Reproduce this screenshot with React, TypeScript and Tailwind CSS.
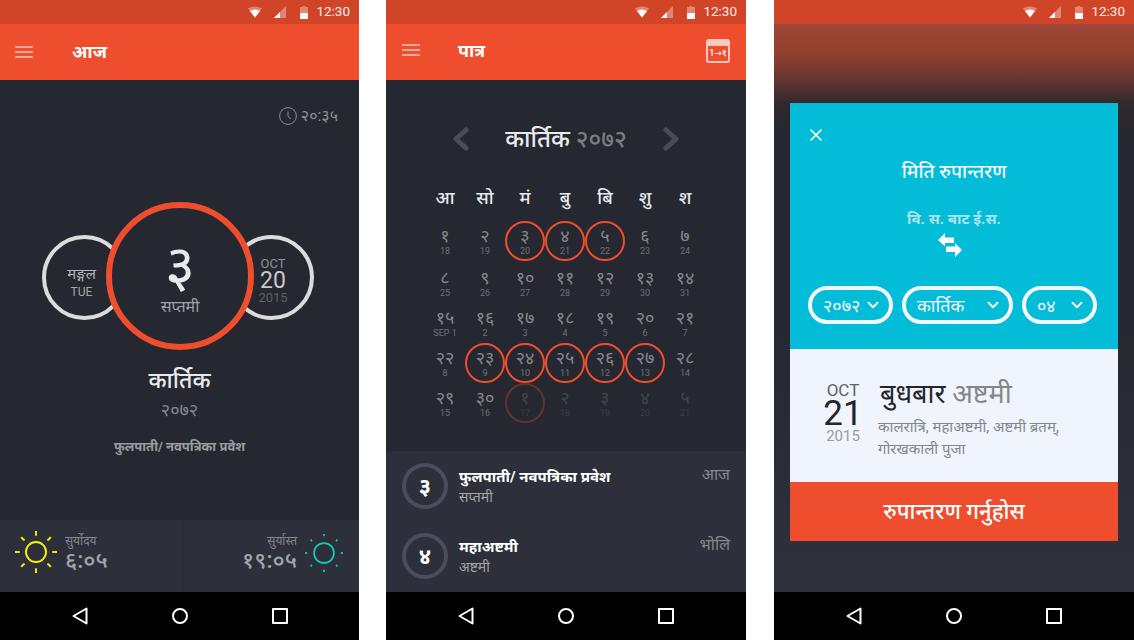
import React from 'react';
import { X, ChevronDown } from 'lucide-react';

const font = 'font-["Roboto","Noto_Sans","Noto_Sans_Devanagari","Lohit_Devanagari","DejaVu_Sans",sans-serif]';

const StatusBar = () => (
  <div className="h-6 shrink-0 flex items-center justify-end pr-[9px] bg-[#d04527]">
    <svg width="14" height="12" viewBox="0 0 14 12">
      <path d="M0 2.5 Q7 -1.5 14 2.5 L7 11.5 Z" fill="#fff" fillOpacity="0.35" />
      <path d="M2 5 Q7 2 12 5 L7 11.5 Z" fill="#fff" />
    </svg>
    <svg width="12" height="12" viewBox="0 0 12 12" className="ml-[12px]">
      <path d="M0 12 L12 0 V12 Z" fill="#fff" fillOpacity="0.35" />
      <path d="M0 12 L6 6 V12 Z" fill="#fff" />
    </svg>
    <svg width="8" height="13" viewBox="0 0 8 13" className="ml-[14px]">
      <path d="M2.5 0 H5.5 V1 H8 V13 H0 V1 H2.5 Z" fill="#fff" fillOpacity="0.35" />
      <path d="M0 7 H8 V13 H0 Z" fill="#fff" />
    </svg>
    <span className="ml-[8px] text-[13.5px] text-white/90 leading-none font-['Roboto']">12:30</span>
  </div>
);

const NavBar = () => (
  <div className="h-12 shrink-0 bg-black flex items-center justify-center gap-[84px]">
    <svg width="16" height="18" viewBox="0 0 16 18" fill="none" stroke="#fff" strokeWidth="2" strokeLinejoin="round">
      <path d="M14.5 1.5 V16.5 L1.5 9 Z" />
    </svg>
    <svg width="16" height="16" viewBox="0 0 16 16" fill="none" stroke="#fff" strokeWidth="2">
      <circle cx="8" cy="8" r="7" />
    </svg>
    <div className="w-[16px] h-[16px] border-2 border-white rounded-[1px]" />
  </div>
);

const Menu = () => (
  <div className="w-[18px] flex flex-col gap-[3px]">
    <div className="h-[2px] bg-white/50" />
    <div className="h-[2px] bg-white/50" />
    <div className="h-[2px] bg-white/50" />
  </div>
);

const Sun = ({ color, size, dash, r }: { color: string; size: number; dash: number; r: number }) => {
  const angles = [0, 45, 90, 135, 180, 225, 270, 315];
  return (
    <svg width={size} height={size} viewBox="0 0 44 44" fill="none" stroke={color} strokeWidth="2">
      <circle cx="22" cy="22" r={r} />
      {angles.map((a) => (
        <line key={a} x1="22" y1="0" x2="22" y2={dash} transform={`rotate(${a} 22 22)`} />
      ))}
    </svg>
  );
};

const TodayScreen = () => (
  <div className="w-[359px] h-[640px] flex flex-col bg-[#252830]">
    <StatusBar />
    <div className="h-14 shrink-0 bg-[#ee4e2d] flex items-center pl-[15px]">
      <Menu />
      <span className="ml-[39px] text-[18px] font-bold text-white -mt-[2px]">आज</span>
    </div>
    <div className="flex-1 flex flex-col items-center">
      <div className="self-end mr-[21px] mt-[26px] flex items-center gap-[4px] text-[#8d8f94] text-[16px] leading-[20px]">
        <svg width="18" height="18" viewBox="0 0 18 18" fill="none" stroke="#8d8f94" strokeWidth="1">
          <circle cx="9" cy="9" r="8.4" />
          <path d="M9 4.5 V9.5 L12 12" />
        </svg>
        <span>२०:३५</span>
      </div>
      <div className="mt-[76px] mr-[3px] flex items-center">
        <div className="w-[85px] h-[85px] rounded-full border-4 border-[#dcdcdc] flex flex-col items-center pt-[26px] pr-[6px] mt-[2px]">
          <span className="text-[15px] leading-[18px] text-[#b4b6b9] whitespace-nowrap">मङ्गल</span>
          <span className="text-[12px] leading-[16px] mt-[1px] text-[#a6a8ab]">TUE</span>
        </div>
        <div className="relative z-10 -ml-[21px] -mr-[25px] w-[148px] h-[148px] rounded-full border-[6px] border-[#ee4e2d] bg-[#252830] flex flex-col items-center pt-[28px]">
          <span className="text-[58px] leading-[60px] text-[#e8eaee]">३</span>
          <span className="text-[16px] leading-[20px] text-[#a0a2a6] mt-[1px]">सप्तमी</span>
        </div>
        <div className="w-[85px] h-[85px] rounded-full border-4 border-[#dcdcdc] flex flex-col items-center pt-[18px] pl-[3px] mt-[2px]">
          <span className="text-[13px] leading-[14px] text-[#8f9194]">OCT</span>
          <span className="text-[23px] leading-[20px] text-[#c8c9cb]">20</span>
          <span className="text-[13px] leading-[14px] text-[#5f6166]">2015</span>
        </div>
      </div>
      <span className="mt-[15px] text-[23px] leading-[32px] font-medium text-[#e8eaee]">कार्तिक</span>
      <span className="mt-[2px] text-[18px] leading-[22px] text-[#85878b]">२०७२</span>
      <span className="mt-[16px] text-[13px] leading-[20px] font-bold text-[#9a9c9f]">फुलपाती/ नवपत्रिका प्रवेश</span>
    </div>
    <div className="h-[72px] shrink-0 bg-[#2d303b] flex">
      <div className="flex-1 flex items-center pl-[15px] pr-2 border-r border-[#2a2d37]">
        <div className="-mt-[8px]">
          <Sun color="#f6f000" size={42} dash={5} r={10.5} />
        </div>
        <div className="ml-[8px] flex flex-col -mt-[6px]">
          <span className="text-[12px] leading-[16px] text-[#85878b]">सुर्योदय</span>
          <span className="text-[23px] leading-[24px] font-medium text-[#a2a4a8]">६:०५</span>
        </div>
      </div>
      <div className="flex-1 flex items-center justify-end pr-[16px]">
        <div className="flex flex-col items-end -mt-[6px]">
          <span className="text-[12px] leading-[16px] text-[#85878b]">सुर्यास्त</span>
          <span className="text-[23px] leading-[24px] font-medium text-[#a2a4a8]">१९:०५</span>
        </div>
        <div className="ml-[8px] -mt-[6px]">
          <Sun color="#14c8b4" size={38} dash={2.5} r={11.5} />
        </div>
      </div>
    </div>
    <NavBar />
  </div>
);

const days = ['आ', 'सो', 'मं', 'बु', 'बि', 'शु', 'श'];

type Cell = { np: string; en: string; ring?: boolean; dim?: boolean };

const cells: Cell[] = [
  { np: '१', en: '18' }, { np: '२', en: '19' }, { np: '३', en: '20', ring: true }, { np: '४', en: '21', ring: true }, { np: '५', en: '22', ring: true }, { np: '६', en: '23' }, { np: '७', en: '24' },
  { np: '८', en: '25' }, { np: '९', en: '26' }, { np: '१०', en: '27' }, { np: '११', en: '28' }, { np: '१२', en: '29' }, { np: '१३', en: '30' }, { np: '१४', en: '31' },
  { np: '१५', en: 'SEP 1' }, { np: '१६', en: '2' }, { np: '१७', en: '3' }, { np: '१८', en: '4' }, { np: '१९', en: '5' }, { np: '२०', en: '6' }, { np: '२१', en: '7' },
  { np: '२२', en: '8' }, { np: '२३', en: '9', ring: true }, { np: '२४', en: '10', ring: true }, { np: '२५', en: '11', ring: true }, { np: '२६', en: '12', ring: true }, { np: '२७', en: '13', ring: true }, { np: '२८', en: '14' },
  { np: '२९', en: '15' }, { np: '३०', en: '16' }, { np: '१', en: '17', ring: true, dim: true }, { np: '२', en: '18', dim: true }, { np: '३', en: '19', dim: true }, { np: '४', en: '20', dim: true }, { np: '५', en: '21', dim: true },
];

const DayCell = ({ cell }: { cell: Cell }) => (
  <div className={`flex justify-center items-start ${cell.dim ? 'opacity-30' : ''}`}>
    <div className={`w-10 h-10 shrink-0 rounded-full flex flex-col items-center pt-[3px] ${cell.ring ? 'border-2 border-[#ee4e2d]' : 'border-2 border-transparent'}`}>
      <span className="text-[18px] leading-[20px] text-[#85878d] whitespace-nowrap">{cell.np}</span>
      <span className="text-[9px] leading-[10px] text-[#6e7076] whitespace-nowrap">{cell.en}</span>
    </div>
  </div>
);

const EventRow = ({ num, title, sub, when }: { num: string; title: string; sub: string; when: string }) => (
  <div className="h-[70px] flex items-center pl-4 pr-4">
    <div className="w-[46px] h-[46px] rounded-full border-4 border-[#4a4e5c] flex items-center justify-center text-[22px] font-bold text-white">{num}</div>
    <div className="ml-[11px] flex-1 flex flex-col">
      <span className="text-[15px] leading-[22px] font-bold text-white">{title}</span>
      <span className="text-[14px] leading-[18px] text-[#a2a4a8]">{sub}</span>
    </div>
    <span className="self-start mt-[14px] text-[16px] leading-[20px] text-[#85878d]">{when}</span>
  </div>
);

const CalendarScreen = () => (
  <div className="w-[360px] h-[640px] flex flex-col bg-[#252830]">
    <StatusBar />
    <div className="h-14 shrink-0 bg-[#ee4e2d] flex items-center pl-[16px] pr-[16px]">
      <div className="-mt-[4px]"><Menu /></div>
      <span className="ml-[38px] text-[18px] font-bold text-white -mt-[4px]">पात्र</span>
      <div className="ml-auto w-6 h-6 rounded-[3px] border-2 border-[#fbc9bd] flex flex-col -mt-[2px] overflow-hidden">
        <div className="h-[5px] shrink-0 bg-[#fbc9bd]" />
        <span className="flex-1 flex items-center justify-center text-[9px] font-bold leading-none text-[#fde0d8] whitespace-nowrap">1→१</span>
      </div>
    </div>
    <div className="flex-1 flex flex-col items-center">
      <div className="mt-[41px] w-[226px] flex items-center justify-between">
        <svg width="16" height="24" viewBox="0 0 16 24" fill="none" stroke="#4a4d57" strokeWidth="5" strokeLinecap="round" strokeLinejoin="round">
          <path d="M13 3 L3 12 L13 21" />
        </svg>
        <span className="text-[24px] leading-[36px] font-medium text-[#e8eaee] whitespace-nowrap">
          कार्तिक <span className="text-[#7a7c82]">२०७२</span>
        </span>
        <svg width="16" height="24" viewBox="0 0 16 24" fill="none" stroke="#4a4d57" strokeWidth="5" strokeLinecap="round" strokeLinejoin="round">
          <path d="M3 3 L13 12 L3 21" />
        </svg>
      </div>
      <div className="mt-[29px] mr-[2px] w-[280px] grid grid-cols-7 grid-rows-[35px_42px_40px_40px_40px_40px]">
        {days.map((d) => (
          <span key={d} className="text-center text-[18px] leading-[24px] font-medium text-[#e8eaee]">{d}</span>
        ))}
        {cells.map((c, i) => (
          <DayCell key={i} cell={c} />
        ))}
      </div>
    </div>
    <div className="h-[141px] shrink-0 bg-[#2d303b]">
      <EventRow num="३" title="फुलपाती/ नवपत्रिका प्रवेश" sub="सप्तमी" when="आज" />
      <EventRow num="४" title="महाअष्टमी" sub="अष्टमी" when="भोलि" />
    </div>
    <NavBar />
  </div>
);

const Pill = ({ label, width }: { label: string; width: string }) => (
  <div className={`${width} h-[38px] rounded-full border-[4px] border-[#f4f8fb] flex items-center justify-between pl-[11px] pr-[7px] text-[#f4f8fb] text-[18px]`}>
    <span className="whitespace-nowrap">{label}</span>
    <ChevronDown size={18} strokeWidth={2.5} />
  </div>
);

const ConvertScreen = () => (
  <div className="w-[360px] h-[640px] flex flex-col bg-[#252830]">
    <StatusBar />
    <div className="flex-1 px-4 pt-[79px] bg-[linear-gradient(180deg,#9c4738_0px,#93402c_30px,#5a3330_60px,#30282c_80px,#252830_110px,#252830_300px,#2f323d_100%)]">
      <div className="w-[328px] flex flex-col">
        <div className="h-[246px] bg-[#02bcd8] flex flex-col items-center relative">
          <X size={20} strokeWidth={2} color="#fff" className="absolute left-[16px] top-[22px]" />
          <span className="mt-[56px] text-[19px] leading-[26px] font-medium text-[#f4f8fb]">मिति रुपान्तरण</span>
          <span className="mt-[24px] text-[15px] leading-[20px] font-bold text-[#a9e3ee]">वि. स. बाट ई.स.</span>
          <svg width="24" height="24" viewBox="0 0 24 24" fill="#fff" className="mt-[4px] mr-[8px]">
            <path d="M0 7 L7 0 V4.5 H16 V10 H7 V13.5 Z" />
            <path d="M24 17 L17 24 V19 H8 V13.5 H17 V10 Z" />
          </svg>
          <div className="mt-[29px] w-full pl-[18px] flex gap-[9px]">
            <Pill label="२०७२" width="w-[85px]" />
            <Pill label="कार्तिक" width="w-[111px]" />
            <Pill label="०४" width="w-[75px]" />
          </div>
        </div>
        <div className="h-[133px] bg-[#f0f4fc] flex items-start pl-[35px] pt-[33px]">
          <div className="w-[36px] flex flex-col items-center">
            <span className="text-[17px] leading-[16px] text-[#5f6166]">OCT</span>
            <span className="text-[35px] leading-[30px] mt-[1px] text-[#22252c]">21</span>
            <span className="text-[15px] leading-[14px] text-[#9a9c9f]">2015</span>
          </div>
          <div className="ml-[17px] flex flex-col -mt-[5px]">
            <span className="pl-[2px] text-[27px] leading-[34px] text-[#22252c] whitespace-nowrap">बुधबार <span className="text-[#84868c]">अष्टमी</span></span>
            <span className="mt-[5px] text-[15px] leading-[22px] text-[#84868c] w-[200px]">कालरात्रि, महाअष्टमी, अष्टमी ब्रतम्, गोरखकाली पुजा</span>
          </div>
        </div>
        <div className="h-[59px] bg-[#ee4e2d] flex items-center justify-center text-[22px] font-medium text-white">रुपान्तरण गर्नुहोस</div>
      </div>
    </div>
    <NavBar />
  </div>
);

export default function App() {
  return (
    <div className={`w-[1134px] h-[640px] bg-white flex overflow-hidden ${font}`}>
      <TodayScreen />
      <div className="ml-[27px]"><CalendarScreen /></div>
      <div className="ml-[28px]"><ConvertScreen /></div>
    </div>
  );
}
